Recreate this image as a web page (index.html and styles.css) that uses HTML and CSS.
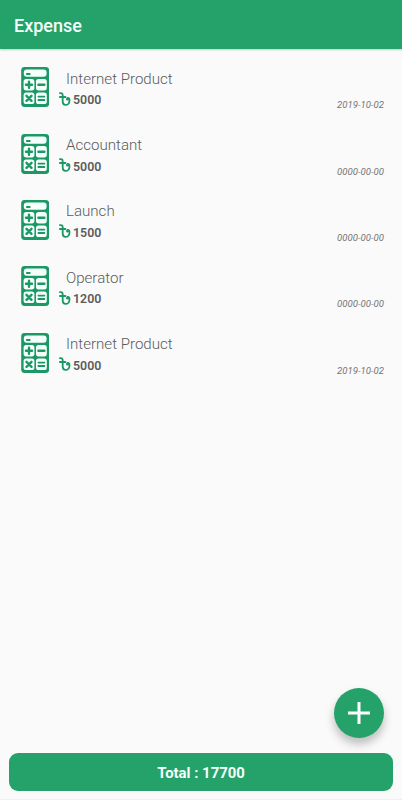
FILE: index.html
```html
<!DOCTYPE html>
<html lang="en">
<head>
    <meta charset="UTF-8">
    <meta name="viewport" content="width=device-width, initial-scale=1.0">
    <title>Expense</title>
    <link rel="stylesheet" href="styles.css">
</head>
<body>

<!-- Shared icons -->
<svg class="icon-defs" width="0" height="0">
    <symbol id="icon-calc" viewBox="0 0 28 40">
        <rect class="calc-body" width="28" height="40" rx="3.4"/>
        <rect class="calc-key" x="2.6" y="2.6" width="22.8" height="7.2" rx="3"/>
        <rect class="calc-key" x="2.4" y="12" width="10.8" height="11.4" rx="2.6"/>
        <rect class="calc-key" x="14.8" y="12" width="10.8" height="11.4" rx="2.6"/>
        <rect class="calc-key" x="2.4" y="25.6" width="10.8" height="11.4" rx="2.6"/>
        <rect class="calc-key" x="14.8" y="25.6" width="10.8" height="11.4" rx="2.6"/>
        <path class="calc-line" d="M5.6 7h3"/>
        <path class="calc-sign" d="M4.8 17.7h6M7.8 14.7v6M17.2 17.7h6M5.3 28.8l5 5M10.3 28.8l-5 5"/>
        <path class="calc-line" d="M17.2 29.6h6M17.2 33h6"/>
    </symbol>
    <symbol id="icon-taka" viewBox="0 0 12 14">
        <path class="taka-line" d="M1 1.2c1.8-.4 2.7.4 2.7 2v6.4c0 2.1 1 3.3 2.8 3.3 2.5 0 4-2.1 4-4.5 0-1.5-.8-2.4-1.8-2.4"/>
        <path class="taka-line" d="M.9 5h5.6"/>
        <circle class="taka-dot" cx="8.5" cy="7.1" r="1.5"/>
    </symbol>
</svg>

<header class="toolbar">
    <h1>Expense</h1>
</header>

<main class="expense-list">
    <div class="expense">
        <svg class="calc"><use href="#icon-calc"/></svg>
        <div class="info">
            <div class="name">Internet Product</div>
            <div class="amount"><svg class="taka"><use href="#icon-taka"/></svg><span>5000</span></div>
        </div>
        <div class="date">2019-10-02</div>
    </div>
    <div class="expense">
        <svg class="calc"><use href="#icon-calc"/></svg>
        <div class="info">
            <div class="name">Accountant</div>
            <div class="amount"><svg class="taka"><use href="#icon-taka"/></svg><span>5000</span></div>
        </div>
        <div class="date">0000-00-00</div>
    </div>
    <div class="expense">
        <svg class="calc"><use href="#icon-calc"/></svg>
        <div class="info">
            <div class="name">Launch</div>
            <div class="amount"><svg class="taka"><use href="#icon-taka"/></svg><span>1500</span></div>
        </div>
        <div class="date">0000-00-00</div>
    </div>
    <div class="expense">
        <svg class="calc"><use href="#icon-calc"/></svg>
        <div class="info">
            <div class="name">Operator</div>
            <div class="amount"><svg class="taka"><use href="#icon-taka"/></svg><span>1200</span></div>
        </div>
        <div class="date">0000-00-00</div>
    </div>
    <div class="expense">
        <svg class="calc"><use href="#icon-calc"/></svg>
        <div class="info">
            <div class="name">Internet Product</div>
            <div class="amount"><svg class="taka"><use href="#icon-taka"/></svg><span>5000</span></div>
        </div>
        <div class="date">2019-10-02</div>
    </div>
</main>

<button class="add" aria-label="Add expense">
    <svg width="22" height="22" viewBox="0 0 22 22"><path d="M11 0v22M0 11h22"/></svg>
</button>

<footer class="total">Total : 17700</footer>

</body>
</html>
```
FILE: styles.css
```css
* {
    box-sizing: border-box;
}

body {
    font-family: Roboto, sans-serif;
    background-color: #fafafa;
    margin: 0;
    height: 100vh;
    display: flex;
    flex-direction: column;
    border-bottom: 1px solid #f0f0f2;
}

.icon-defs {
    position: absolute;
}

.toolbar {
    height: 49px;
    padding: 3px 14px 0;
    display: flex;
    align-items: center;
    background-color: #24a269;
    box-shadow: 0 1px 2px rgba(0, 0, 0, 0.2);
}

h1 {
    margin: 0;
    color: #f4fffa;
    font-size: 18px;
    font-weight: 500;
    line-height: 24px;
}

.expense-list {
    flex: 1;
    padding: 18.4px 18px 0 20.7px;
}

.expense {
    height: 66.35px;
    display: flex;
    align-items: flex-start;
}

.calc {
    width: 28.4px;
    height: 40px;
    flex: none;
}

.calc-body {
    fill: #1b9865;
}

.calc-key {
    fill: #f5fffb;
}

.calc-sign,
.calc-line {
    fill: none;
    stroke: #1b9865;
    stroke-width: 2.4;
    stroke-linecap: round;
}

.calc-line {
    stroke-width: 1.8;
}

.info {
    flex: 1;
    padding-left: 9.4px;
}

.name {
    margin: 1.3px 0 0 7.5px;
    color: #5c5c5c;
    font-size: 15.1px;
    font-weight: 300;
    line-height: 20px;
}

.amount {
    margin-top: 2.6px;
    display: flex;
    align-items: center;
    gap: 2px;
    color: #5c5c5c;
    font-size: 12.4px;
    font-weight: 600;
    line-height: 18px;
}

.taka {
    width: 12px;
    height: 14px;
    margin: -3px 0 0 0.5px;
}

.taka-line {
    fill: none;
    stroke: #1b9865;
    stroke-width: 1.8;
    stroke-linecap: round;
}

.taka-dot {
    fill: #1b9865;
}

.date {
    margin-top: 32px;
    color: #757575;
    font-size: 9.6px;
    font-style: italic;
    line-height: 12px;
}

.add {
    width: 50px;
    height: 50px;
    margin: 0 18px 15px 0;
    padding: 0;
    align-self: flex-end;
    display: flex;
    align-items: center;
    justify-content: center;
    background-color: #24a269;
    border: none;
    border-radius: 50%;
    box-shadow: 0 6px 10px rgba(0, 0, 0, 0.25);
    cursor: pointer;
}

.add path {
    stroke: white;
    stroke-width: 3;
}

.total {
    height: 38px;
    margin: 0 9px 8px;
    background-color: #24a269;
    border-radius: 9px;
    color: #f4fffa;
    font-size: 14.9px;
    font-weight: 700;
    line-height: 40px;
    text-align: center;
}
```
